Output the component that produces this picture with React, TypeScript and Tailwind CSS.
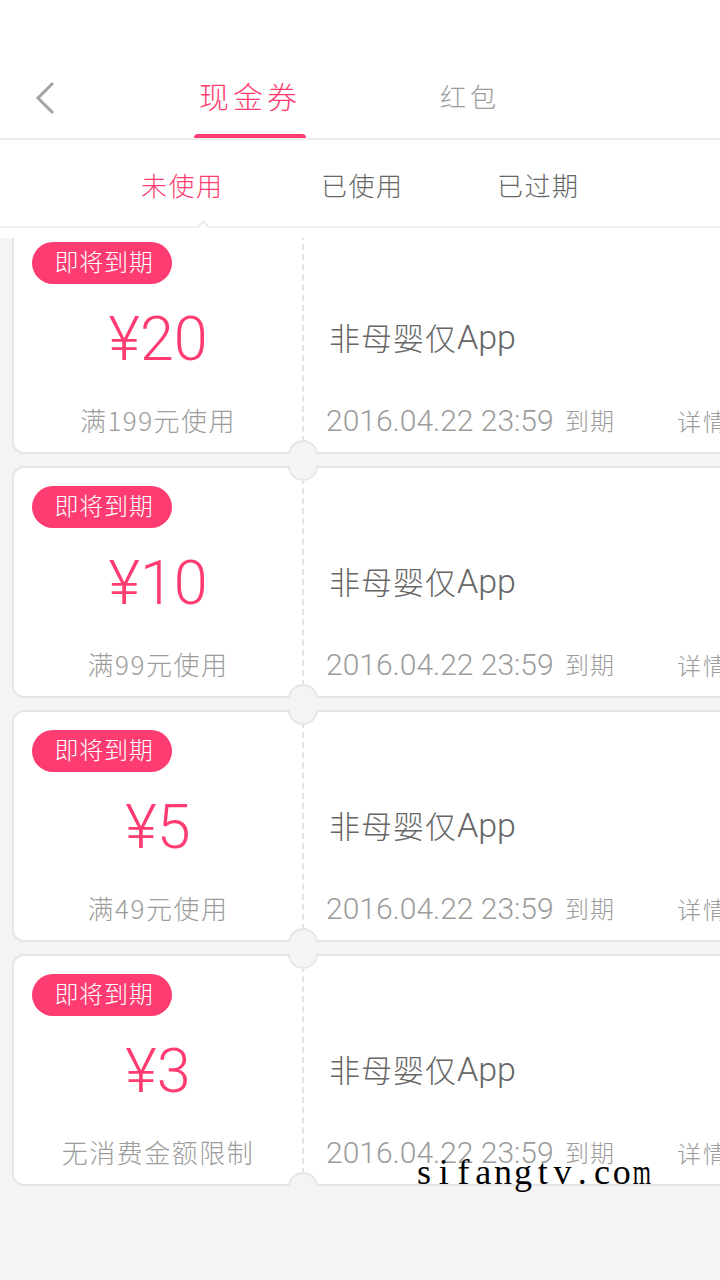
const sans = { fontFamily: '"Noto Sans CJK SC", sans-serif' };

const coupons = [
  { price: '¥20', cond: '满199元使用' },
  { price: '¥10', cond: '满99元使用' },
  { price: '¥5', cond: '满49元使用' },
  { price: '¥3', cond: '无消费金额限制' },
];

function Coupon({ price, cond }: { price: string; cond: string }) {
  return (
    <div className="relative ml-3 flex h-[232px] w-[770px] shrink-0 rounded-[12px] border-2 border-[#e6e6e6] bg-white">
      <div className="flex w-[288px] shrink-0 flex-col">
        <div className="ml-[18px] mt-[18px] flex h-[42px] w-[140px] items-center justify-center rounded-full bg-[#fe3c71] pb-[5px] pl-[4px] text-[24px] font-light tracking-[0.75px] text-white">
          即将到期
        </div>
        <div className="mt-[20px] flex h-[72px] items-center justify-center font-['Roboto'] text-[61px] font-light text-[#fe3c71]">
          {price}
        </div>
        <div className="mt-[25px] flex h-[40px] items-center justify-center pb-[3px] text-[26px] font-light tracking-[1.5px] text-[#9c9c9c]">
          {cond}
        </div>
      </div>
      <div className="h-full w-0 border-l-2 border-dashed border-[#e3e3e3]" />
      <div className="flex flex-1 flex-col pl-[22px]">
        <div className="mt-[91px] flex h-[46px] items-center pb-[2px] pl-[3px] text-[31px] font-light text-[#666666]">
          <span className="tracking-[1px]">非母婴仅</span>
          <span className="font-['Roboto'] text-[34px] font-light">App</span>
        </div>
        <div className="mt-[40px] flex h-[40px] items-center whitespace-nowrap text-[#9c9c9c]">
          <span className="w-[239px] pb-[2px] font-['Roboto'] text-[30px] font-light">2016.04.22 23:59</span>
          <span className="w-[112px] pb-[3px] text-[24px] font-light tracking-[1px]">到期</span>
          <span className="pb-[1px] text-[24px] font-light tracking-[2px]">详情</span>
        </div>
      </div>
      <div className="absolute left-[274px] top-[-2px] h-[15px] w-[30px] overflow-hidden">
        <div className="absolute bottom-0 left-0 h-[30px] w-[30px] rounded-full border-2 border-[#e6e6e6] bg-[#f4f4f4]" />
      </div>
      <div className="absolute bottom-[-2px] left-[274px] h-[14px] w-[30px] overflow-hidden">
        <div className="absolute left-0 top-0 h-[30px] w-[30px] rounded-full border-2 border-[#e6e6e6] bg-[#f4f4f4]" />
      </div>
    </div>
  );
}

export default function App() {
  return (
    <div className="relative flex h-[1280px] w-[720px] flex-col overflow-hidden bg-[#f4f4f4]" style={sans}>
      <header className="flex h-[140px] shrink-0 border-b-2 border-[#ececec] bg-white">
        <div className="ml-[34px] mt-[80px] h-[36px] w-[24px]">
          <svg width="24" height="36" viewBox="0 0 24 36" fill="none">
            <polyline points="19,3 4,18 19,33" stroke="#a3a3a3" strokeWidth="3" />
          </svg>
        </div>
        <div className="relative ml-[136px] flex h-[138px] w-[112px] justify-center pt-[73px]">
          <span className="text-[30px] leading-[44px] font-light tracking-[4px] text-[#fe3c71]">现金券</span>
          <div className="absolute bottom-0 left-0 h-[4px] w-[112px] rounded-t-[4px] bg-[#fe3c71]" />
        </div>
        <div className="ml-[134px] pt-[76px]">
          <span className="text-[26px] leading-[40px] font-light tracking-[4px] text-[#9c9c9c]">红包</span>
        </div>
      </header>
      <nav className="relative flex h-[88px] shrink-0 items-center border-b-2 border-[#f0f0f0] bg-white pl-[141px] pt-[2px] text-[26px] font-light tracking-[1.5px]">
        <span className="w-[180px] text-[#fe3c71]">未使用</span>
        <span className="w-[176px] text-[#666666]">已使用</span>
        <span className="text-[#666666]">已过期</span>
        <div className="absolute bottom-[-5px] left-[199px] h-[9px] w-[9px] rotate-45 border-l-2 border-t-2 border-[#ececec] bg-white" />
      </nav>
      <div className="h-[10px] shrink-0 bg-white" />
      <div className="min-h-0 flex-1 overflow-hidden">
        <div className="-mt-[16px] flex flex-col gap-[12px]">
          {coupons.map((c) => (
            <Coupon key={c.price} {...c} />
          ))}
        </div>
      </div>
      <div className="absolute left-[414px] top-[1151px] flex font-['Liberation_Serif'] text-[36px] leading-[42px] text-black">
        {'sifangtv.co'.split('').map((ch, i) => (
          <span key={i} className="flex w-[19.8px] justify-center">{ch}</span>
        ))}
        <span className="flex w-[19.8px] scale-x-[0.65] justify-center">m</span>
      </div>
    </div>
  );
}
